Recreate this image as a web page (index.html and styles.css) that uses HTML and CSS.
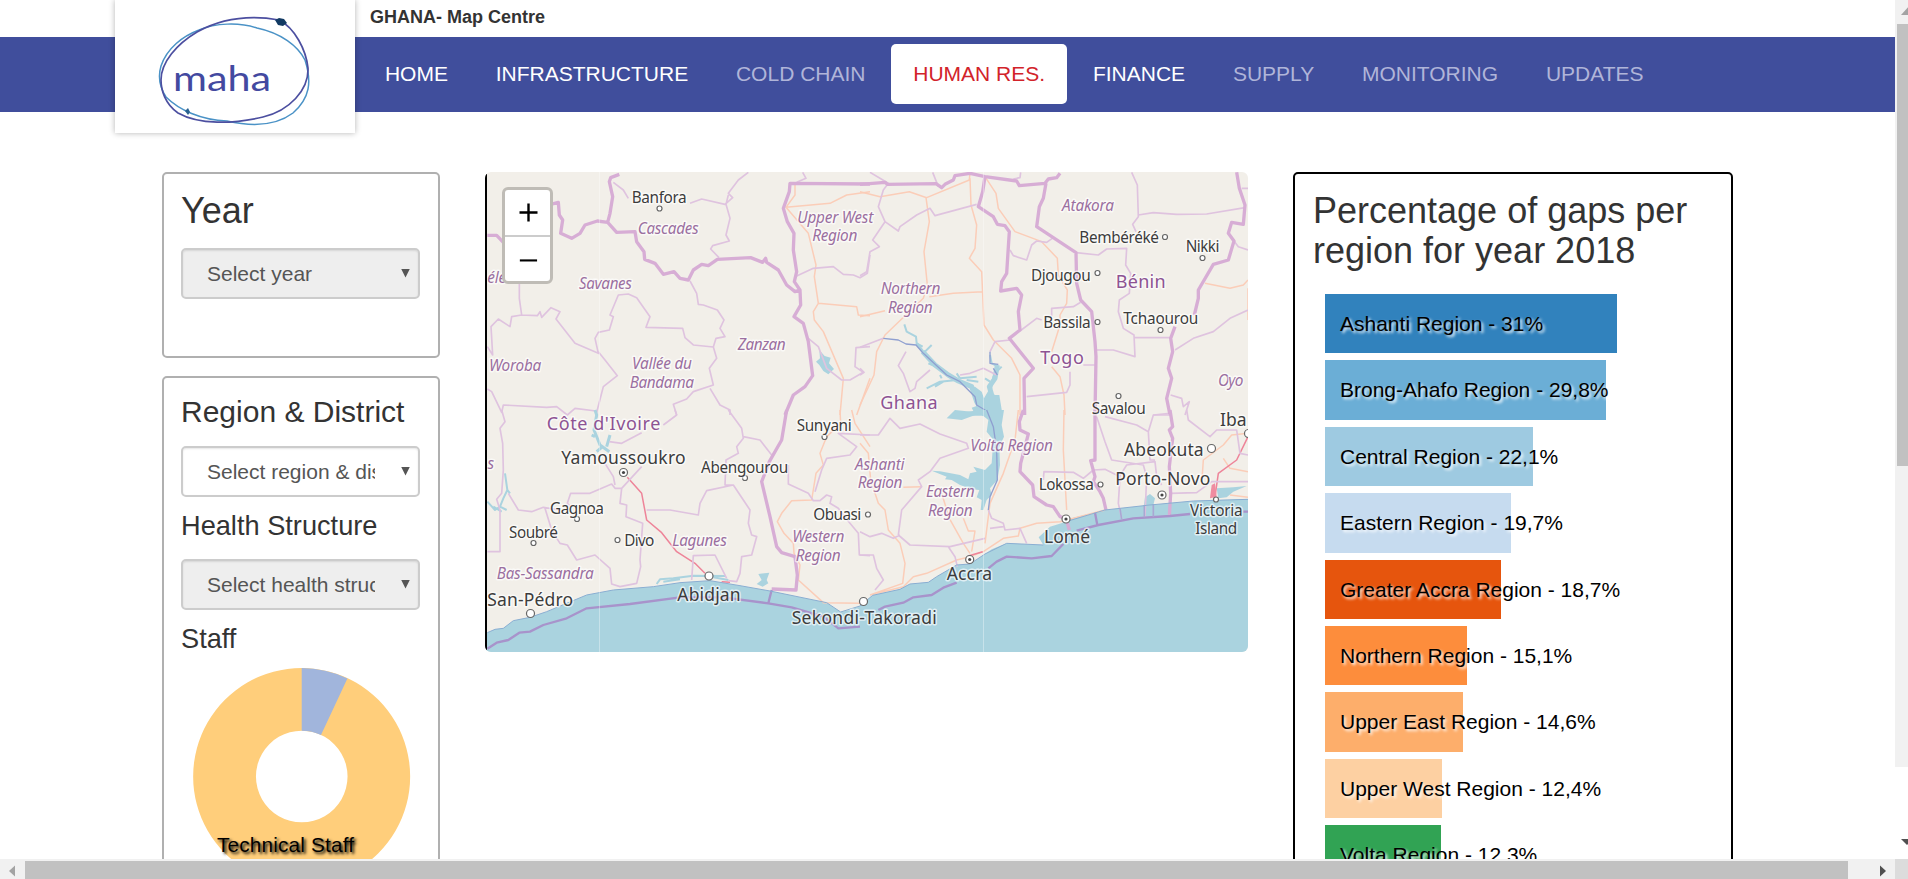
FILE: index.html
```html
<!DOCTYPE html>
<html lang="en">
<head>
<meta charset="utf-8">
<title>GHANA- Map Centre</title>
<link rel="stylesheet" href="styles.css">
</head>
<body>
<div class="window">
  <div class="page">
    <header class="header">
      <div class="site-title">GHANA- Map Centre</div>
      <nav class="nav">
        <a class="nav-item">HOME</a>
        <a class="nav-item">INFRASTRUCTURE</a>
        <a class="nav-item muted">COLD CHAIN</a>
        <a class="nav-item active">HUMAN RES.</a>
        <a class="nav-item">FINANCE</a>
        <a class="nav-item muted">SUPPLY</a>
        <a class="nav-item muted">MONITORING</a>
        <a class="nav-item muted">UPDATES</a>
      </nav>
      <div class="logo">
        <svg width="240" height="133" viewBox="0 0 240 133" fill="none">
          <path d="M46 66C52 48 68 36 84 30C100 23 124 22 142 28C166 33 183 46 190 60C197 82 195 98 178 113C162 125 138 127 112 121C86 120 64 110 51 97C44 86 43 76 46 66Z" stroke="#4a92c6" stroke-width="1.5"/>
          <path d="M46 80C46 62 62 44 82 32C102 21 130 14 164 20C180 28 191 50 193 68C194 90 174 111 148 117C118 124 84 125 63 113C50 104 46 90 46 80Z" stroke="#4c4fa0" stroke-width="1.7"/>
          <path d="M160 20l4-2 5 1 3 4-4 3-5-1z" fill="#123a63"/>
          <path d="M70 111l3-3 2 4-2 3z" fill="#2a6190"/>
          <text x="58" y="90.500" class="logo-text" textLength="98" lengthAdjust="spacingAndGlyphs">maha</text>
        </svg>
      </div>
    </header>

    <main class="columns">
      <aside class="filters">
        <section class="panel year">
          <h2 class="h-large">Year</h2>
          <div class="select disabled"><span class="select-text">Select year</span><i class="caret"></i></div>
        </section>
        <section class="panel region">
          <h3 class="h-mid">Region &amp; District</h3>
          <div class="select"><span class="select-text">Select region &amp; district</span><i class="caret"></i></div>
          <h4 class="h-small">Health Structure</h4>
          <div class="select disabled"><span class="select-text">Select health structure</span><i class="caret"></i></div>
          <h4 class="h-small">Staff</h4>
          <svg class="donut" width="239" height="217" viewBox="181 667 239 217">
            <path d="M301.7 667A108.5 108.5 0 1 1 301.6 667ZM301.7 729.7A45.8 45.8 0 1 0 301.8 729.7Z" fill="#ffce7b"/>
            <path d="M301.7 667A108.5 108.5 0 0 1 347.4 677.4L321 734A45.8 45.8 0 0 0 301.7 729.7Z" fill="#a1b5dc"/>
            <text x="217" y="850.7" class="donut-label" textLength="137">Technical Staff</text>
          </svg>
        </section>
      </aside>

      <section class="map">
        <svg width="763" height="480" viewBox="485 172 763 480">
          <!-- sea -->
          <g class="sea">
            <g transform="translate(480 410) scale(.33333)"><path d="M0 680L22 668 45 658 70 655 100 632 150 622 200 605 250 585 320 555 400 540 520 530 600 518 690 512 780 527 870 543 1040 578 1060 592 1082 606 1110 600 1141 588V740H0Z"/></g>
            <g transform="translate(860 410) scale(.33333)"><path d="M0 588L38 556 120 538 150 522 205 517 230 500 290 465 330 462 375 432 395 418 440 400 550 405 536 382 570 350 618 335 640 323 735 300 870 285 1000 273 1170 267V740H0Z"/></g>
          </g>
          <g transform="translate(480 165) scale(.33333)">
            <path class="water" d="M1008 590L1020 580 1018 555 1034 573 1052 578 1047 595 1062 612 1045 628 1030 618 1018 600Z"/>
            <path class="road" d="M945 55V90L918 127 1050 115 1100 90 1170 80M918 127L985 205 1008 300 1003 335 1015 415 1130 425 1135 450 1170 452M1015 415L1000 440 1003 465 1030 500 1090 640 1080 750M1170 640L1130 750"/>
            <path class="area" d="M400 52L430 75 445 100M805 22L775 45 745 85 758 98 735 118 665 102 630 115M745 90L738 118 750 160 738 210 748 228 698 242 692 252 717 278M968 22L978 40 950 52M950 333L1000 310 1060 305 1090 328 1120 330 1140 338 1162 325 1170 270M118 350V400L125 450 95 455 90 485 55 462 33 485 38 570 22 545M125 450L172 452 180 440 185 457 213 428 240 440 228 462 285 535 355 565 345 520 355 502 388 495 400 455 390 450 415 390 445 387 470 398 510 455 498 487 608 490 615 518 640 540 700 546 708 520 735 515 720 490 732 465 712 435 670 420 655 418 650 385 630 348M355 560L375 585 412 632 370 665 348 750M22 672L35 680 65 742 70 720 200 727 230 725 262 750 285 730 348 738M700 546L710 580 688 610 700 660 640 680 620 702 580 718 590 750M690 670L720 720 750 735V750M985 520L1015 545 1040 610 1085 645 1110 645 1150 622 1125 605 1128 548 1170 545"/>
            <path class="border" d="M22 211L50 211 70 232M212 118L235 112 238 150 248 165 242 205 275 220 300 205 315 180 352 168 383 172 390 145 398 95 388 50 392 38 418 28M383 172L410 202 465 200 470 230 492 260 494 283 525 295 550 328 582 320 600 340 625 345 640 315 665 298 685 302 712 283 812 278 848 292 857 280 860 292 895 315 920 360 945 380 960 375 943 350 950 320 940 255 942 205 922 170 910 130 928 80 930 55 1170 57M960 375L962 420 942 455 970 475 985 530 998 632 975 665 940 690 915 750"/>
          </g>
          <g transform="translate(860 165) scale(.33333)">
            <g class="lake"><path d="M133 478L140 500 168 515 170 535 188 545M195 560L215 540M205 595L240 610M245 640L240 630M290 645L240 650 200 670M250 650L225 665M300 640L290 625M300 640L350 635M320 645L355 650M390 570L395 595 415 605 400 635 390 690M400 630L425 605M390 650L375 640"/>
            <path class="w9" d="M170 535L190 562"/>
            <path class="w14" d="M188 560L225 600 265 630 295 648 335 665 350 710 375 750"/>
            <path class="w14" d="M412 600L405 640 388 665 395 690 410 710 400 750"/></g>
            <path class="water" d="M330 670L345 665 365 680 372 700 392 665 396 690 418 690 428 752H290L310 742 340 738 335 728 352 722Z"/>
            <path class="road" d="M330 22L328 45 200 98 148 80 60 95 0 80M198 98L208 170 192 260 202 360 190 400 75 510 50 560 42 630 0 720M0 455L75 437M208 395L280 385 368 380M330 40L333 120 350 180 345 250 328 280 365 320 372 480 400 525 455 580 480 630V750M375 35L408 85 415 130 465 200 545 230 592 280 595 330 622 375 620 415 600 450 600 480 575 560M575 605L600 635 612 690 615 750M1035 355L1110 370 1150 360 1164 345M1164 370V465"/>
            <path class="area" d="M30 22L85 55 70 75 55 125 75 170 38 225 58 245 30 260 20 320 0 332M75 170L115 198 120 185 170 150 210 130 225 152 350 118M218 22L235 65M460 42L480 38 482 22M815 22L832 60 835 155 818 178 828 200M835 150L880 143 950 148 1040 147 1155 128M1145 70H1164M648 263L715 270 740 252 800 250 797 300 812 325 808 385 778 405 775 440 790 490 822 510 825 575 760 555 708 555M822 518H930M1122 228L1135 245 1164 255M945 555L1000 520 1060 500 1110 460 1164 435M575 455V430L640 425 662 412M545 465L530 460 480 498M450 255L460 272 500 285 515 240 530 228 560 232 580 218M0 547L70 520M138 560L115 602 130 625 150 680 165 670 170 650 210 615M300 630L330 625 370 610 410 630M450 525L405 530 390 560M500 695L620 682 630 660V620M670 600H705M932 690L965 700 970 725 988 710 975 750M0 610L12 622 0 630M880 750L930 745"/>
            <path class="river" d="M70 520L115 525 138 537 168 540 190 565 260 630 300 650 345 695 350 720 375 735 380 750M390 560V595L415 598M400 610L412 630"/>
            <path class="border" d="M0 58L38 55 75 52 82 58 228 56 245 68 255 58 280 45 285 32 330 25 375 35 470 48 478 62 555 55 565 42 590 38 600 25M375 35L368 80 355 125 400 155 412 178 435 182 448 200 440 325 425 350 422 378 470 370 485 390 475 440 480 495 448 520 520 610 492 640 494 750M558 55L550 100 538 125 530 185 648 263 650 355 662 405 695 440 705 530 708 575 705 750M1130 22L1138 70 1155 120 1150 178 1115 172 1105 205 1122 228 1105 285 1060 298 1015 375 1015 400 1003 450M945 485L932 520 938 560 925 610 935 640 920 700 930 750"/>
          </g>
          <g transform="translate(480 410) scale(.33333)">
            <g class="lake"><path class="w9" d="M345 0L350 15 342 60 360 105 388 125M390 75L380 110M350 125L365 112M335 75L345 80"/><path d="M75 190L82 240 70 265 60 290 45 300 22 275M60 290L80 300M82 240L90 250M40 290L65 305"/><path d="M530 522L540 508 580 505 640 497 735 498M550 515L600 508M700 502L745 510"/></g>
            <path class="water" d="M835 492L868 488 860 510 865 520 848 530 830 522 845 510Z"/>
            <path class="road" d="M1080 0L1082 40 1040 80 1020 130 1030 165 1008 190 995 270 935 272 905 310 892 335 912 370 940 400 942 430 960 465 955 510 1030 578 1140 580M1115 0L1125 40 1170 110"/>
            <path class="motorway" d="M442 202L485 250 500 330 545 368 590 425 645 460 675 490M725 515L750 517"/>
            <path class="area" d="M65 0L75 35 60 55 68 100 70 180 65 250 50 268 60 300V425H22M85 250L115 300 155 305 190 292 240 300M195 295L215 360 240 400 262 405 290 450 345 435 390 475 395 522 420 530 470 520 482 470 480 450 488 340 438 320 440 285 420 280 425 235 485 170M272 290L262 280 272 250 330 250 395 222 405 235 425 235M375 160L400 200 405 225M388 95L425 100 485 68M550 45L590 15 585 0M500 300L570 300 655 315 660 280 680 242 760 225 810 300 805 340 815 375 830 380 815 435 785 440 780 490 770 515 745 512M745 0L785 55 790 85 770 110 775 130 738 150 735 225 760 225M790 80L840 90 875 135M635 510L640 437 705 435 740 505M925 165V222L985 250 1000 272 1020 272 1040 255 1055 260 1050 280 1075 295 1110 340 1135 370 1138 435 1170 437M1005 245L1025 180 1040 145 1110 135 1130 110 1075 70 1170 75"/>
            <path class="border" d="M920 0L905 90 868 155 845 215 870 320 890 410 905 428 945 440 952 495 948 540 875 537"/>
            <path class="maritime" d="M22 716L50 698 85 690 118 668 150 665 190 645 260 625 320 595 450 582 600 562 730 562 865 580 935 592 1030 620 1075 655 1140 650M875 540L865 580"/>
            <path class="coast" d="M22 668L45 658 70 655 100 632 150 622 200 605 320 555 400 540 520 530 600 518 690 512 780 527 870 543 1040 578 1082 606 1140 588"/>
          </g>
          <g transform="translate(860 410) scale(.33333)">
            <path class="water" d="M285 0L335 5 370 0H432L425 45 432 80 418 110 420 165 412 210 390 235 395 255 380 270 370 300 362 300 365 270 350 262 358 240 335 238 300 225 275 210 255 208 260 200 215 182 240 184 300 195 325 208 330 190 350 185 340 170 375 180 395 160 400 90 380 65 385 30 360 10 305 30 260 25ZM855 262L870 252 885 265 880 285H852ZM1070 235L1120 232 1160 228 1120 245 1100 262 1075 265Z"/>
            <path class="road" d="M0 100L25 130 32 210 55 280 75 300 85 360 120 400 135 460 128 520 30 555M130 232L185 230M30 555L130 530 160 500 200 490 290 450 330 440 370 425 430 385 475 378 480 355 530 340 600 335 735 300M475 0L465 90 430 190 390 280 375 400M245 250L268 325 310 400 330 430M310 325L325 363 345 363 335 425M612 0L610 120 620 300M1164 70L1115 75 1090 105 1030 150 1025 225M1110 255L1164 262M1090 145L1110 175 1164 185"/>
            <path class="motorway" d="M1164 80L1130 150 1075 190 1065 260M325 438L368 425"/>
            <path class="lagos" d="M1055 225L1065 220 1070 260 1050 265Z"/>
            <path class="area" d="M0 75L55 75 90 25 120 55 180 42 240 72 320 100 325 115 240 145 210 185 175 210 185 230 125 300 115 375 150 405 270 410 375 385M0 365L30 380 65 370 100 385 120 375M0 435H40L50 475 70 510 45 540M265 410L285 440 292 470M385 300L395 325 430 340 435 360 480 355 500 400M430 350L390 355M550 210L552 185 640 187 670 205 700 180 735 178 780 200 775 280 785 325M710 20L735 95 755 150 850 165 860 200 855 320M775 205L800 165 885 155 890 200 905 225M735 20L830 45 865 65 870 150 885 150M865 65L880 15H930M980 0L985 30 1050 80 1070 60 1130 60 1140 130 1164 135M930 250L1010 248 1055 215 1164 215"/>
            <path class="border" d="M490 0L478 35 480 60 505 72 482 160 480 185 518 225 522 260 560 285 580 290 600 320 618 325 628 360M705 0V150L692 152 705 200 700 215 720 245 730 265 738 300M930 0L938 50 928 60 938 85 928 170 932 250 928 320"/>
            <path class="river" d="M380 0L400 50 410 120 412 210 390 260 385 300"/>
            <path class="maritime" d="M55 600L75 590 130 578 160 562 215 555 250 533 290 518M385 475L410 455 440 440 515 445 575 438 610 402M650 362L715 345 820 325 930 318 990 312M1150 305H1170M705 308L712 345"/>
            <path class="area on-sea" d="M780 296L785 328M853 285V322M880 283V320"/>
            <path class="coast" d="M0 588L38 556 120 538 150 522 205 517 230 500 290 465 330 462 375 432 440 400 550 405M618 335L735 300 870 285 1000 273 1164 268"/>
          </g>
          <path class="seam" d="M599.5 172V652M983.5 172V652"/>
          <g class="town">
            <circle cx="659.5" cy="208.5" r="2.5"/><circle cx="1165" cy="237" r="2.5"/><circle cx="1202.5" cy="258" r="2.5"/><circle cx="1097.5" cy="273" r="2.5"/><circle cx="1097.5" cy="322" r="2.5"/><circle cx="1160.5" cy="330" r="2.5"/><circle cx="1118.5" cy="396" r="2.5"/><circle cx="824.5" cy="437" r="2.5"/><circle cx="745" cy="478" r="2.5"/><circle cx="577" cy="519" r="2.5"/><circle cx="533.5" cy="543" r="2.5"/><circle cx="617.5" cy="540" r="2.5"/><circle cx="868" cy="514.5" r="2.5"/><circle cx="1100.5" cy="484.5" r="2.5"/><circle cx="1216" cy="499.5" r="2.5"/>
            <circle cx="530.5" cy="613.5" r="4"/><circle cx="709" cy="576" r="4"/><circle cx="863.5" cy="601.5" r="4"/><circle cx="1211.5" cy="448.5" r="4"/><circle cx="1248.5" cy="433.5" r="4"/>
            <circle cx="623.5" cy="472.5" r="4"/><circle cx="969.7" cy="559.5" r="4"/><circle cx="1066" cy="519" r="4"/><circle cx="1162" cy="495" r="4"/>
          </g>
          <g fill="#444"><circle cx="623.5" cy="472.5" r="1.6"/><circle cx="969.7" cy="559.5" r="1.6"/><circle cx="1066" cy="519" r="1.6"/><circle cx="1162" cy="495" r="1.6"/></g>
          <g class="label place">
            <text x="631.7" y="202.7" textLength="55">Banfora</text>
            <text x="1079.3" y="243" textLength="79.7">Bembéréké</text>
            <text x="1185.7" y="251.7" textLength="33.7">Nikki</text>
            <text x="1031" y="280.7" textLength="59.7">Djougou</text>
            <text x="1043.3" y="327.7" textLength="47.3">Bassila</text>
            <text x="1123.3" y="324" textLength="75">Tchaourou</text>
            <text x="1091.7" y="413.7" textLength="54">Savalou</text>
            <text x="796.7" y="431" textLength="55">Sunyani</text>
            <text x="701" y="472.7" textLength="87.3">Abengourou</text>
            <text x="550" y="514" textLength="54">Gagnoa</text>
            <text x="509" y="537.7" textLength="49">Soubré</text>
            <text x="624.3" y="545.7" textLength="30">Divo</text>
            <text x="813.3" y="520" textLength="48">Obuasi</text>
            <text x="1038.7" y="490" textLength="55.3">Lokossa</text>
            <text x="1190" y="516" textLength="52.7">Victoria</text>
            <text x="1195.3" y="534.3" textLength="42">Island</text>
          </g>
          <g class="label city">
            <text x="561.3" y="464.3" textLength="124.3">Yamoussoukro</text>
            <text x="487.3" y="606.3" textLength="85.7">San-Pédro</text>
            <text x="677.3" y="600.7" textLength="63.3">Abidjan</text>
            <text x="791.7" y="623.7" textLength="145">Sekondi-Takoradi</text>
            <text x="1124" y="455.7" textLength="79.7">Abeokuta</text>
            <text x="1115.3" y="485.3" textLength="95">Porto-Novo</text>
            <text x="1220" y="426">Iba</text>
            <text x="1044" y="543" textLength="46">Lomé</text>
            <text x="946.7" y="580.3" textLength="45.3">Accra</text>
          </g>
          <g class="label country">
            <text x="1115.7" y="288.3" textLength="50">Bénin</text>
            <text x="1040.3" y="364.3" textLength="43.7">Togo</text>
            <text x="880.3" y="409" textLength="57.3">Ghana</text>
            <text x="546.7" y="430" textLength="113.7">Côte d'Ivoire</text>
          </g>
          <g class="label district">
            <text x="637.7" y="234.3" textLength="61">Cascades</text>
            <text x="797.3" y="223" textLength="76">Upper West</text>
            <text x="812.3" y="241" textLength="45">Region</text>
            <text x="487.3" y="283.3" textLength="19">élé</text>
            <text x="579" y="288.7" textLength="53">Savanes</text>
            <text x="489" y="371.3" textLength="52.3">Woroba</text>
            <text x="632" y="369" textLength="60">Vallée du</text>
            <text x="629.7" y="387.7" textLength="64.3">Bandama</text>
            <text x="737.7" y="349.7" textLength="48">Zanzan</text>
            <text x="1062" y="210.7" textLength="52">Atakora</text>
            <text x="880.7" y="294.3" textLength="59.7">Northern</text>
            <text x="888" y="312.7" textLength="44.7">Region</text>
            <text x="1218" y="386.3" textLength="25.3">Oyo</text>
            <text x="487.500" y="469.3">s</text>
            <text x="672.3" y="545.7" textLength="54.7">Lagunes</text>
            <text x="496.7" y="579" textLength="97">Bas-Sassandra</text>
            <text x="792.3" y="542.3" textLength="52">Western</text>
            <text x="795.7" y="561" textLength="45">Region</text>
            <text x="855" y="470" textLength="49.5">Ashanti</text>
            <text x="857.7" y="488.3" textLength="44.7">Region</text>
            <text x="970.3" y="451.3" textLength="82.7">Volta Region</text>
            <text x="926" y="497.3" textLength="48.7">Eastern</text>
            <text x="928" y="515.7" textLength="44.7">Region</text>
          </g>
          <path class="edge" d="M486 174V650"/>
        </svg>
        <div class="zoom-control">
          <svg width="45" height="45" viewBox="0 0 45 45"><path d="M14.5 22.5h18M23.5 13.5v18" stroke="#000" stroke-width="2.4"/></svg>
          <svg class="zoom-out" width="45" height="46" viewBox="0 0 45 46"><path d="M14.5 24.5h18" stroke="#000" stroke-width="2.2"/></svg>
        </div>
      </section>

      <section class="panel gaps">
        <h2 class="h-large">Percentage of gaps per region for year 2018</h2>
        <div class="bars">
          <div class="bar" style="width:292px;background:#3182bd">Ashanti Region - 31%</div>
          <div class="bar" style="width:281px;background:#6baed6">Brong-Ahafo Region - 29,8%</div>
          <div class="bar" style="width:208px;background:#9ecae1">Central Region - 22,1%</div>
          <div class="bar" style="width:185.6px;background:#c6dbef">Eastern Region - 19,7%</div>
          <div class="bar" style="width:176px;background:#e6550d">Greater Accra Region - 18,7%</div>
          <div class="bar" style="width:142px;background:#fd8d3c">Northern Region - 15,1%</div>
          <div class="bar" style="width:137.5px;background:#fdae6b">Upper East Region - 14,6%</div>
          <div class="bar" style="width:116.8px;background:#fdd0a2">Upper West Region - 12,4%</div>
          <div class="bar" style="width:116px;background:#31a354">Volta Region - 12,3%</div>
        </div>
      </section>
    </main>
  </div>

  <div class="vscroll">
    <svg class="v-up" width="13" height="24"><path d="M6 15l10-11v11z" fill="#a3a3a3"/></svg>
    <div class="v-thumb"></div>
    <div class="v-track"></div>
    <div class="v-end"><svg width="13" height="20"><path d="M6 4h12l-6 6z" fill="#505050"/></svg></div>
  </div>
  <div class="hscroll">
    <svg class="h-arrow" width="25" height="20"><path d="M15 6.500v11l-6-5.500z" fill="#a3a3a3"/></svg>
    <div class="h-thumb"></div>
    <svg class="h-right" width="47" height="20"><path d="M32 6.500v11l6-5.500z" fill="#505050"/></svg>
  </div>
  <div class="corner"></div>
</div>
</body>
</html>
```
FILE: styles.css
```css
* { box-sizing: border-box; }
body { margin: 0; overflow: hidden; background: #fff; color: #333; font-family: "Liberation Sans", Arial, sans-serif; }
.window { display: grid; grid-template: 859px 20px / 1895px 13px; width: 1908px; height: 879px; overflow: hidden; }
.page { overflow: hidden; }

.header { position: relative; height: 112px; }
.site-title { height: 37px; padding-left: 370px; font-size: 18px; font-weight: bold; line-height: 34px; }
.nav { display: flex; align-items: flex-start; height: 75px; padding: 7px 0 0 363px; background: #404e9c; }
.nav-item { margin-right: 4px; padding: 0 21.900px; border-radius: 5px; color: #fff; font-size: 21px; line-height: 60px; white-space: nowrap; }
.nav-item.muted { color: #b0b5d9; }
.nav-item.active { background: #fff; color: #d2232a; }
.logo { position: absolute; left: 115px; top: 0; width: 240px; height: 133px; background: #fff; box-shadow: 0 0 6px rgba(0, 0, 0, .3); }
.logo-text { font-family: Lato, sans-serif; font-size: 34px; fill: #4349a0; }

.columns { display: flex; align-items: flex-start; padding: 60px 0 0 162px; }
.filters { display: flex; flex-direction: column; gap: 18px; width: 278px; margin-right: 45px; }
.panel { border: 2px solid #b0b0b0; border-radius: 5px; padding: 17px 17px; }
.year { height: 186px; }
.region { height: 560px; padding-top: 17px; }
h2, h3, h4 { margin: 0; font-weight: normal; }
.h-large { font-size: 36px; line-height: 39.5px; }
.year .h-large { margin-bottom: 17.5px; }
.h-mid { margin-bottom: 18px; font-size: 30px; line-height: 33px; }
.h-small { margin: 0; padding: 11px 0 16px; font-size: 27.2px; line-height: 35px; }
.select { display: flex; align-items: center; justify-content: space-between; width: 239px; height: 51px; padding: 0 8px 0 24px; border: 2px solid #ccc; border-radius: 5px; box-shadow: inset 0 1px 2px rgba(0, 0, 0, .1); color: #555; font-size: 21px; }
.select.disabled { background: #eee; }
.select-text { width: 168px; overflow: hidden; line-height: 30px; white-space: nowrap; }
.caret { width: 9px; height: 9px; background: #555; clip-path: polygon(0 0, 100% 0, 50% 100%); margin-bottom: 1px; }
.donut { display: block; margin-top: -4.500px; }
.donut-label { font-size: 20.800px; fill: #000; text-shadow: 2px 2px 3px #000; }

.map { position: relative; width: 763px; height: 480px; margin-right: 45px; overflow: hidden; border-radius: 6px; background: #f2efe9; }
.map > svg { display: block; }
.map path { fill: none; stroke-linejoin: round; }
.map .sea path, .map .water { fill: #aad3df; }
.map .lagos { fill: #ef8ca0; }
.map .lake path { stroke: #aad3df; stroke-width: 6; }
.map .lake .w9 { stroke-width: 9; }
.map .lake .w14 { stroke-width: 15; }
.map .road { stroke: #fbcdb8; stroke-width: 4.5; }
.map .motorway { stroke: #ee8499; stroke-width: 4.5; }
.map .area { stroke: #dfc3df; stroke-width: 5; }
.map .on-sea { stroke: #a9a7d3; }
.map .border { stroke: #d7add5; stroke-width: 10; }
.map .river { stroke: #8f9fd0; stroke-width: 4; }
.map .maritime { stroke: #a893cb; stroke-width: 7; }
.map .coast { stroke: #8aaed2; stroke-width: 3; }
.map .seam { stroke: #fff; stroke-opacity: .35; }
.map .edge { stroke: #000; stroke-width: 2; }
.town { fill: #fff; stroke: #666; stroke-width: 1.200; }
.label { font-family: "Noto Sans", sans-serif; font-size: 15.4px; paint-order: stroke; stroke: rgba(255, 255, 255, .65); stroke-width: 3px; stroke-linejoin: round; }
.place, .city { fill: #3c3c3c; }
.city { font-size: 17.500px; }
.country { font-size: 18px; fill: #8d5393; }
.district { font-style: italic; fill: #9b6fa0; }
.zoom-control { position: absolute; left: 17px; top: 15px; width: 51px; height: 97px; border: 3px solid #bfbcb6; border-radius: 6px; background: #fff; }
.zoom-control svg { display: block; }
.zoom-control .zoom-out { border-top: 2px solid #ccc; }

.gaps { width: 440px; height: 740px; border-color: #000; padding: 17px 18px; }
.bars { display: flex; flex-direction: column; gap: 7px; padding: 24px 0 0 12px; }
.bar { height: 59.4px; flex: none; padding-left: 15px; color: #000; font-size: 21px; line-height: 59px; white-space: nowrap; text-shadow: 2px 2px 3px #fff; }

.vscroll { display: flex; flex-direction: column; background: #f1f1f1; }
.v-up { flex: none; }
.v-thumb { height: 444px; margin-left: 2px; background: #c1c1c1; }
.v-track { height: 303px; }
.v-end { flex: 1; padding-top: 68px; background: #fff; }
.hscroll { display: flex; background: #f1f1f1; }
.h-thumb { width: 1823px; margin-top: 2px; background: #c1c1c1; }
.corner { background: #dcdcdc; }
```
